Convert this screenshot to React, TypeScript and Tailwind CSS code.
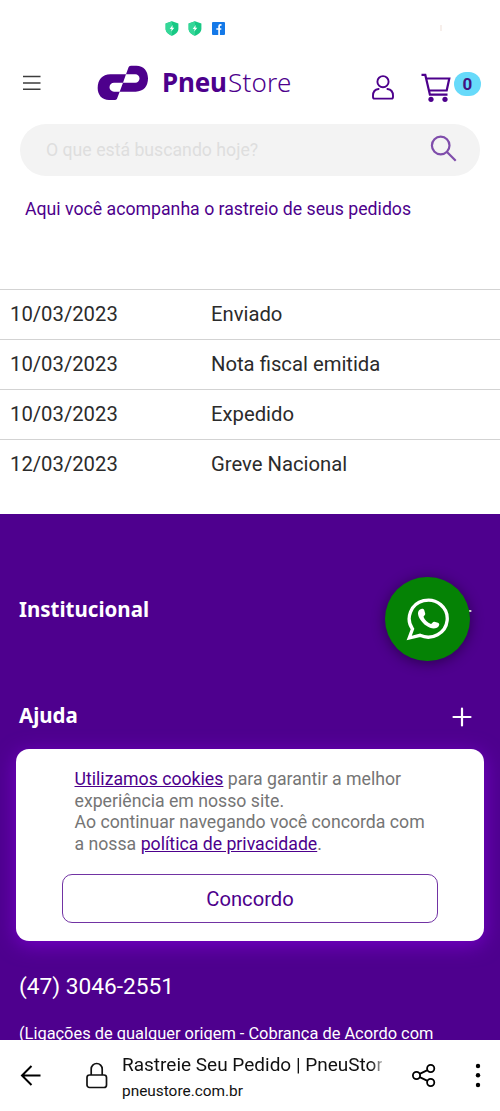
const trackingEvents = [
  { date: '10/03/2023', status: 'Enviado' },
  { date: '10/03/2023', status: 'Nota fiscal emitida' },
  { date: '10/03/2023', status: 'Expedido' },
  { date: '12/03/2023', status: 'Greve Nacional' },
];

function Shield() {
  return (
    <svg width="14" height="15" viewBox="0 0 14 15">
      <path d="M7 .3 13.4 2.6V8c0 3-2.7 5.2-6.4 6.800C3.300 13.200.6 11 .6 8V2.600z" fill="#17c884" />
      <path d="M7 .3V14.800C3.300 13.200.6 11 .6 8V2.600z" fill="#35d798" />
      <path d="M7.700 4 4.700 8h1.900L6.300 10.500 9.300 6.700H7.400z" fill="#fff" />
    </svg>
  );
}

function StatusBar() {
  return (
    <div className="flex h-14 shrink-0 items-center pl-[165px]">
      <Shield />
      <div className="ml-[9px]">
        <Shield />
      </div>
      <svg className="ml-[10px]" width="13" height="13" viewBox="0 0 13 13">
        <rect width="13" height="13" rx="1" fill="#1479e8" />
        <path d="M7.100 13V8.300M4.300 7h5M9.500 2.800H8.600Q7.100 2.800 7.100 4.300V8.300" fill="none" stroke="#fff" strokeWidth="1.700" />
      </svg>
      <div className="ml-[215px] h-1.5 w-0.5 bg-[#f7efeb]" />
    </div>
  );
}

function Logo() {
  return (
    <div className="ml-14 flex w-[195px] items-center">
      <svg className="shrink-0" width="52" height="36" viewBox="290 196 156 108">
        <path
          fill="#4d008c"
          fillRule="evenodd"
          d="M393 198H408C430 198 443 214 443 236C443 260 430 276 406 276H358L350 297Q348 301 343 301H326C305 301 292 286 292 265C292 240 306 224 330 224H377L385 202Q387 198 393 198ZM377 224L368 249H405A12.500 12.500 0 0 0 405 224ZM368 249H341A13.500 13.500 0 0 0 341 276H358Z"
        />
      </svg>
      <div className="-mt-0.5 ml-[13px] flex font-['Noto_Sans'] text-[26px] leading-9 text-[#4d008c]">
        <span className="w-[66px] font-bold tracking-[-0.2px]">Pneu</span>
        <span className="font-light tracking-[0.2px]">Store</span>
      </div>
    </div>
  );
}

function Header() {
  return (
    <header className="flex h-[68px] shrink-0 items-start pl-[23px]">
      <svg className="mt-[19px]" width="18" height="16" viewBox="0 0 18 16">
        <path d="M0 1.500h17.500M0 8h17.500M0 14.300h17.500" stroke="#3c3c3c" strokeWidth="1.400" />
      </svg>
      <div className="mt-[9px]">
        <Logo />
      </div>
      <svg className="ml-[80px] mt-[19px]" width="22" height="25" viewBox="0 0 22 25" fill="none" stroke="#4d008c" strokeWidth="1.900">
        <circle cx="11" cy="6.700" r="5.600" />
        <path d="M6.600 14C3.200 14.500 1 17 1 20.500V22q0 1.600 1.600 1.600H19.400Q21 23.600 21 22V20.500C21 17 18.800 14.500 15.400 14" strokeLinecap="round" />
      </svg>
      <svg className="ml-[27px] mt-[17px]" width="30" height="30" viewBox="0 0 30 30" fill="none" stroke="#4d008c" strokeWidth="2.200">
        <path d="M.5 1.900H4.300L8.900 21.700H26.500M5.200 5.500H28.300L25.700 17.500H8.300" />
        <circle cx="10" cy="26.300" r="2.600" fill="#4d008c" stroke="none" />
        <circle cx="24" cy="26.300" r="2.600" fill="#4d008c" stroke="none" />
      </svg>
      <span className="ml-[3px] mt-4 flex h-6 w-[27px] items-center justify-center rounded-full bg-[#67dafa] pt-0.5 text-[17px] font-bold text-[#42127f]">
        0
      </span>
    </header>
  );
}

function SearchBar() {
  return (
    <div className="mx-5 flex h-[52px] shrink-0 items-center justify-between rounded-full bg-[#f3f3f3] pl-[26px] pr-[23px]">
      <span className="text-[17.700px] text-[#dedede]">O que está buscando hoje?</span>
      <svg className="-mt-1" width="27" height="27" viewBox="0 0 27 27" fill="none" stroke="#7f4dab" strokeWidth="2.200">
        <circle cx="10.700" cy="10.500" r="8.800" />
        <path d="M17 17l8.700 8.700" />
      </svg>
    </div>
  );
}

function PlusIcon() {
  return (
    <svg width="20" height="20" viewBox="0 0 20 20">
      <path d="M10 1.500v17M1.500 10h17" stroke="#fff" strokeWidth="2.200" strokeLinecap="round" />
    </svg>
  );
}

function CookieBanner() {
  return (
    <div className="absolute left-4 top-[749px] h-[192px] w-[468px] rounded-[13px] bg-white px-[46px] pt-5 shadow-[0_4px_20px_#7600c8]">
      <p className="whitespace-nowrap pl-[12.500px] text-[17.700px] leading-[21.500px] text-[#757575]">
        <a className="text-[#4d008c] underline">Utilizamos cookies</a> para garantir a melhor
        <br />
        experiência em nosso site.
        <br />
        Ao continuar navegando você concorda com
        <br />a nossa <a className="text-[#4d008c] underline">política de privacidade</a>.
      </p>
      <button className="mt-[19px] block h-[49px] w-[376px] rounded-[10px] border border-[#4d008c]/80 pt-px text-[20.200px] text-[#4d008c]">
        Concordo
      </button>
    </div>
  );
}

function BrowserBar() {
  return (
    <div className="relative flex h-[71px] shrink-0 bg-white text-[#111]">
      <svg className="ml-5 mt-[25px]" width="21" height="21" viewBox="0 0 21 21" fill="none" stroke="#000" strokeWidth="2">
        <path d="M20.500 10.500H2M11.500 1 2 10.500 11.500 20" />
      </svg>
      <svg className="ml-[45px] mt-[22px]" width="22" height="27" viewBox="0 0 22 27" fill="none" stroke="#111" strokeWidth="1.700">
        <rect x="1" y="13" width="19.500" height="12.500" rx="2.500" />
        <path d="M5.200 13V7a5.500 5.500 0 0 1 11 0v6" />
      </svg>
      <div className="ml-3.5 mt-[11px] w-[262px] whitespace-nowrap">
        <div className="w-[260px] bg-linear-to-r from-[#111] from-96% to-[#111]/30 bg-clip-text text-[19px] leading-7 text-transparent">
          Rastreie Seu Pedido | PneuStor
        </div>
        <div className="mt-px text-[15.400px] leading-[22px]">pneustore.com.br</div>
      </div>
      <svg className="ml-[28px] mt-[24px]" width="24" height="24" viewBox="0 0 24 24" fill="none" stroke="#000" strokeWidth="1.800">
        <circle cx="4.500" cy="11.500" r="3.600" />
        <circle cx="18.700" cy="4.500" r="3.600" />
        <circle cx="18.700" cy="18.500" r="3.600" />
        <path d="M7.700 9.900 15.500 6.100M7.700 13.100 15.500 16.900" />
      </svg>
      <svg className="ml-[39px] mt-[23px]" width="6" height="25" viewBox="0 0 6 25">
        <circle cx="3" cy="3" r="2.200" />
        <circle cx="3" cy="12.300" r="2.200" />
        <circle cx="3" cy="22" r="2.200" />
      </svg>
    </div>
  );
}

function WhatsAppButton() {
  return (
    <a className="absolute left-[385px] top-[577px] flex h-[84px] w-[85px] items-center justify-center rounded-full bg-[#058205] shadow-[0_2px_14px_rgba(0,0,0,0.45)]">
      <svg width="44" height="44" viewBox="0 0 44 44">
        <path
          d="M3.200 41 6.500 32A19 18.500 0 1 1 14 38.300Z"
          fill="none"
          stroke="#fff"
          strokeWidth="3.300"
        />
        <path
          d="M14 12.500C15.500 11.200 17.600 11.500 18.200 13L19.200 16.400C19.500 17.700 18 18.700 17.500 19.700C18.500 22.800 21.500 25.700 25 27C26.200 26.500 26.800 24.600 28.300 24.800L32 25.800C33.800 26.400 33.500 28.300 32.300 29.700C29.500 32.500 24.500 31.700 20 28.500C16 25.600 12.300 20.800 12 16.700C11.900 15 12.600 13.500 14 12.500Z"
          fill="#fff"
        />
      </svg>
    </a>
  );
}

export default function App() {
  return (
    <div className="relative flex h-[1111px] w-[500px] flex-col overflow-hidden bg-white font-[Roboto,sans-serif]">
      <StatusBar />
      <Header />
      <SearchBar />
      <h1 className="mt-[19px] h-[94px] shrink-0 pl-[25px] text-[17.700px] leading-7 text-[#4d008c]">
        Aqui você acompanha o rastreio de seus pedidos
      </h1>

      {/* Tracking history */}
      <div className="h-[225px] shrink-0">
        {trackingEvents.map((event, i) => (
          <div key={i} className="flex h-[50px] items-center border-t border-[#d3d3d3] pl-2.5 text-[20.250px] text-[#2b2b2b]">
            <span className="w-[201px]">{event.date}</span>
            <span>{event.status}</span>
          </div>
        ))}
      </div>

      {/* Footer */}
      <footer className="flex min-h-0 grow flex-col overflow-hidden bg-[#4e008e] text-white">
        <div className="mt-[82px] flex h-[30px] shrink-0 items-center justify-between pl-[19px] pr-7">
          <h2 className="-mt-1 font-['Noto_Sans'] text-[20.500px] font-bold">Institucional</h2>
          <PlusIcon />
        </div>
        <div className="mt-[76px] flex h-[30px] shrink-0 items-center justify-between pl-[19px] pr-7">
          <h2 className="-mt-1 font-['Noto_Sans'] text-[20.500px] font-bold">Ajuda</h2>
          <PlusIcon />
        </div>
        <p className="mt-[239px] shrink-0 pl-[19px] text-[22.700px] leading-8">(47) 3046-2551</p>
        <p className="mt-[19px] shrink-0 whitespace-nowrap pl-[19px] text-[16.400px] leading-6">
          (Ligações de qualquer origem - Cobrança de Acordo com
        </p>
      </footer>

      <BrowserBar />

      <CookieBanner />
      <WhatsAppButton />
    </div>
  );
}
